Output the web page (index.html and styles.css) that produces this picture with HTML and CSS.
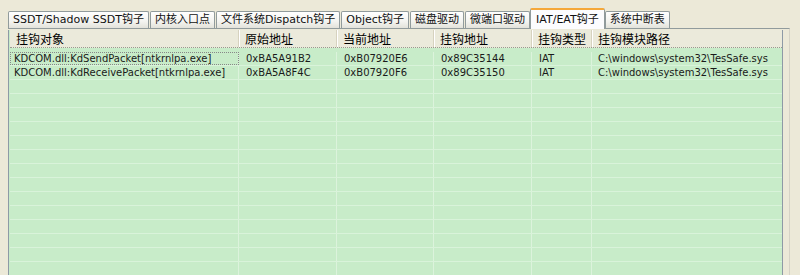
FILE: index.html
```html
<!DOCTYPE html>
<html lang="zh-CN">
<head>
	<meta charset="UTF-8">
	<title>IAT/EAT钩子</title>
	<link rel="stylesheet" href="styles.css">
</head>
<body>
<ul class="tabs">
	<li class="tab">SSDT/Shadow SSDT钩子</li>
	<li class="tab">内核入口点</li>
	<li class="tab">文件系统Dispatch钩子</li>
	<li class="tab">Object钩子</li>
	<li class="tab">磁盘驱动</li>
	<li class="tab">微端口驱动</li>
	<li class="tab active">IAT/EAT钩子</li>
	<li class="tab">系统中断表</li>
</ul>
<div class="panel">
	<div class="list">
		<div class="row head">
			<div class="cell">挂钩对象</div>
			<div class="cell">原始地址</div>
			<div class="cell">当前地址</div>
			<div class="cell">挂钩地址</div>
			<div class="cell">挂钩类型</div>
			<div class="cell">挂钩模块路径</div>
		</div>
		<div class="row">
			<div class="cell focus">KDCOM.dll:KdSendPacket[ntkrnlpa.exe]</div>
			<div class="cell">0xBA5A91B2</div>
			<div class="cell">0xB07920E6</div>
			<div class="cell">0x89C35144</div>
			<div class="cell">IAT</div>
			<div class="cell">C:\windows\system32\TesSafe.sys</div>
		</div>
		<div class="row">
			<div class="cell">KDCOM.dll:KdReceivePacket[ntkrnlpa.exe]</div>
			<div class="cell">0xBA5A8F4C</div>
			<div class="cell">0xB07920F6</div>
			<div class="cell">0x89C35150</div>
			<div class="cell">IAT</div>
			<div class="cell">C:\windows\system32\TesSafe.sys</div>
		</div>
		<div class="row empty"><div class="cell"></div><div class="cell"></div><div class="cell"></div><div class="cell"></div><div class="cell"></div><div class="cell"></div></div>
		<div class="row empty"><div class="cell"></div><div class="cell"></div><div class="cell"></div><div class="cell"></div><div class="cell"></div><div class="cell"></div></div>
		<div class="row empty"><div class="cell"></div><div class="cell"></div><div class="cell"></div><div class="cell"></div><div class="cell"></div><div class="cell"></div></div>
		<div class="row empty"><div class="cell"></div><div class="cell"></div><div class="cell"></div><div class="cell"></div><div class="cell"></div><div class="cell"></div></div>
		<div class="row empty"><div class="cell"></div><div class="cell"></div><div class="cell"></div><div class="cell"></div><div class="cell"></div><div class="cell"></div></div>
		<div class="row empty"><div class="cell"></div><div class="cell"></div><div class="cell"></div><div class="cell"></div><div class="cell"></div><div class="cell"></div></div>
		<div class="row empty"><div class="cell"></div><div class="cell"></div><div class="cell"></div><div class="cell"></div><div class="cell"></div><div class="cell"></div></div>
		<div class="row empty"><div class="cell"></div><div class="cell"></div><div class="cell"></div><div class="cell"></div><div class="cell"></div><div class="cell"></div></div>
		<div class="row empty"><div class="cell"></div><div class="cell"></div><div class="cell"></div><div class="cell"></div><div class="cell"></div><div class="cell"></div></div>
		<div class="row empty"><div class="cell"></div><div class="cell"></div><div class="cell"></div><div class="cell"></div><div class="cell"></div><div class="cell"></div></div>
		<div class="row empty"><div class="cell"></div><div class="cell"></div><div class="cell"></div><div class="cell"></div><div class="cell"></div><div class="cell"></div></div>
		<div class="row empty"><div class="cell"></div><div class="cell"></div><div class="cell"></div><div class="cell"></div><div class="cell"></div><div class="cell"></div></div>
		<div class="row empty"><div class="cell"></div><div class="cell"></div><div class="cell"></div><div class="cell"></div><div class="cell"></div><div class="cell"></div></div>
		<div class="row empty"><div class="cell"></div><div class="cell"></div><div class="cell"></div><div class="cell"></div><div class="cell"></div><div class="cell"></div></div>
	</div>
</div>
</body>
</html>
```
FILE: styles.css
```css
html, body {
	margin: 0;
	padding: 0;
	height: 275px;
	overflow: hidden;
	background: #ece9d8;
	font-family: "DejaVu Sans", "Noto Sans CJK SC", sans-serif;
	font-size: 11px;
	color: #000;
}
.tabs {
	display: flex;
	align-items: flex-end;
	margin: 0;
	padding: 7px 0 0 8px;
	height: 21px;
	list-style: none;
}
.tab {
	height: 16px;
	line-height: 16px;
	padding: 0 4px;
	margin-right: 1px;
	border: 1px solid #919b9c;
	border-bottom: none;
	border-radius: 2px 2px 0 0;
	background: linear-gradient(#ffffff, #f3f3ef 60%, #e3e2da);
	white-space: nowrap;
	color: #111;
}
.tab.active {
	height: 19px;
	line-height: 19px;
	position: relative;
	top: 1px;
	border-top: 2px solid #f5a83a;
	background: #fcfcfe;
	margin: 0 0 0 -1px;
	padding: 0 5px;
}
.panel {
	width: 775px;
	margin-left: 8px;
	padding: 1px 6px 0 0;
	border-top: 1px solid #919b9c;
	border-right: 1px solid #d6d3c6;
	height: 250px;
}
.list {
	border-left: 1px solid #8e9aa6;
	border-right: 1px solid #8e9aa6;
	background: #c8ecc9;
	height: 250px;
	overflow: hidden;
	padding-left: 1px;
}
.row {
	display: grid;
	grid-template-columns: 229px 98px 97px 98px 60px 191px;
	height: 14px;
	line-height: 14px;
	border-bottom: 1px solid #d9f3da;
	box-sizing: border-box;
	font-size: 10px;
	color: #1a1a1a;
}
.cell {
	padding-left: 4px;
	white-space: nowrap;
	overflow: hidden;
	border-right: 1px solid #dcf3dc;
}
.cell:nth-child(n+2) {
	padding-left: 7px;
}
.cell:last-child {
	border-right: none;
	padding-left: 6px;
}
.row.head {
	height: 18px;
	line-height: 17px;
	background: #ebeadb;
	border-bottom: 1px dotted #9a9a90;
	font-family: "Noto Sans CJK SC", sans-serif;
	font-size: 12px;
	color: #000;
	margin-bottom: 4px;
}
.row.head .cell {
	border-right: 1px solid #d6d2bf;
	box-shadow: 1px 0 0 #ffffff;
	padding-left: 6px;
}
.row.head .cell:last-child {
	border-right: none;
	box-shadow: none;
}
.focus {
	outline: 1px dotted #888;
	outline-offset: -1px;
}
```
